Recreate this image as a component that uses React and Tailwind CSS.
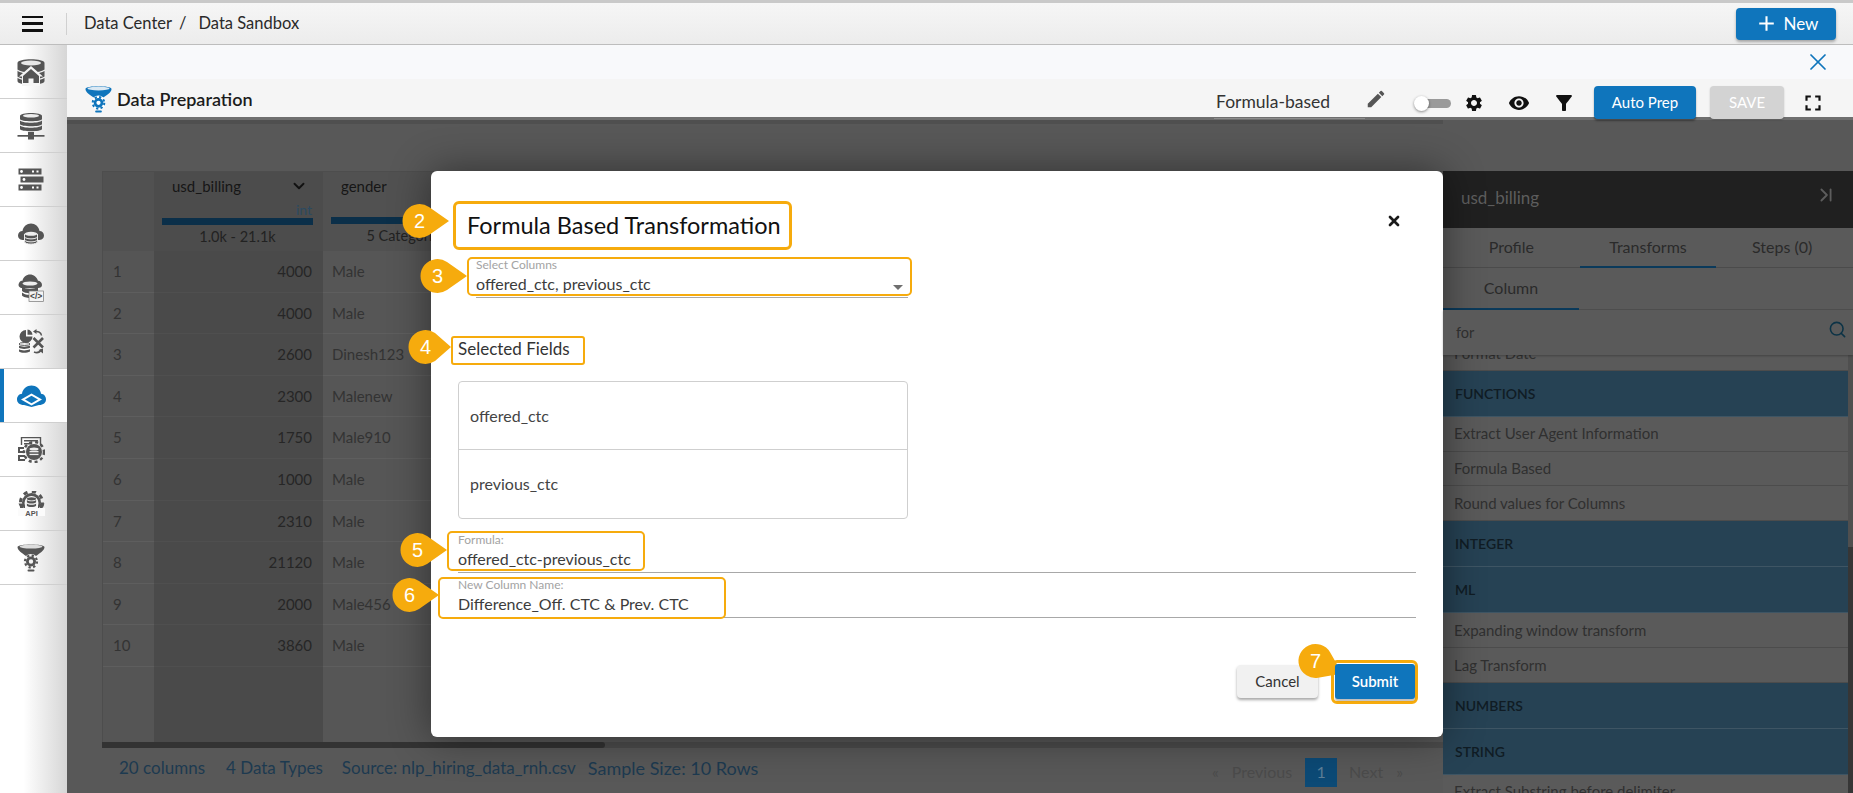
import React from 'react';
import { MdEdit, MdSettings, MdVisibility, MdFilterAlt, MdFullscreen, MdAdd, MdArrowDropDown } from 'react-icons/md';
import { X, Search, ChevronDown, ChevronLast } from 'lucide-react';

const rows = [
  [1, 4000, 'Male'], [2, 4000, 'Male'], [3, 2600, 'Dinesh123'], [4, 2300, 'Malenew'], [5, 1750, 'Male910'],
  [6, 1000, 'Male'], [7, 2310, 'Male'], [8, 21120, 'Male'], [9, 2000, 'Male456'], [10, 3860, 'Male'],
];

function FunnelGear({ color, rim, hole = '#ffffff', className }) {
  return (
    <svg viewBox="0 0 28 29" className={className}>
      <path d="M0.5 4C0.5 0.5 27.5 0.5 27.5 4C27.5 7.500 23 10 19 13L9 13C5 10 0.5 7.500 0.5 4Z" fill={color} />
      <ellipse cx="14" cy="3.600" rx="11.500" ry="2" fill={rim} />
      <circle cx="14" cy="18.500" r="7.600" fill={hole} />
      <circle cx="14" cy="18.500" r="3.600" fill="none" stroke={color} strokeWidth="2.800" />
      <circle cx="14" cy="18.500" r="6" fill="none" stroke={color} strokeWidth="2.200" strokeDasharray="2.300 2.400" />
      <rect x="10.500" y="26.500" width="7" height="2" rx="1" fill={color} />
    </svg>
  );
}

function DbHome() {
  return (
    <svg viewBox="0 0 28 28" className="w-[28px] h-[28px]">
      <path d="M0.500 5C0.500 0 27.500 0 27.500 5V23C27.500 28 0.500 28 0.500 23Z" fill="#555" />
      <ellipse cx="14" cy="5" rx="10" ry="2.400" fill="#e8e8e8" />
      <path d="M0 12C6 16 22 16 28 12M0 19C6 23 22 23 28 19" stroke="#f2f2f2" strokeWidth="1.200" fill="none" />
      <path d="M14 8L26 18.500L23 18.500V28H5V18.500L2 18.500Z" fill="#f5f5f5" />
      <path d="M14 11L22 18V25H16.500V20.500H11.500V25H6V18Z" fill="#555" />
    </svg>
  );
}

function DbNet() {
  return (
    <svg viewBox="0 0 28 28" className="w-[28px] h-[28px]">
      <path d="M3 4C3 0 25 0 25 4V7C25 10 3 10 3 7Z" fill="#555" />
      <ellipse cx="14" cy="3.800" rx="8" ry="1.700" fill="#eee" />
      <path d="M3 8.500C6 11.500 22 11.500 25 8.500V12C25 15 3 15 3 12Z" fill="#555" />
      <path d="M3 13.500C6 16.500 22 16.500 25 13.500V17C25 20 3 20 3 17Z" fill="#555" />
      <rect x="11" y="20" width="6" height="7.500" fill="#555" />
      <rect x="0.500" y="23" width="27" height="1.700" fill="#555" />
    </svg>
  );
}

function Servers() {
  return (
    <svg viewBox="0 0 26 24" className="w-[26px] h-[24px]">
      <rect x="0.500" y="0.500" width="23" height="6" fill="#555" />
      <rect x="2.500" y="8.500" width="23" height="6" fill="#555" />
      <rect x="0.500" y="16.500" width="23" height="6" fill="#555" />
      <circle cx="3.500" cy="3.500" r="1.400" fill="#fff" /><rect x="14" y="2.500" width="2" height="2" fill="#fff" /><rect x="18.500" y="2.500" width="2" height="2" fill="#fff" />
      <circle cx="6" cy="11.500" r="1.400" fill="#fff" />
      <circle cx="3.500" cy="19.500" r="1.400" fill="#fff" /><rect x="14" y="18.500" width="2" height="2" fill="#fff" /><rect x="18.500" y="18.500" width="2" height="2" fill="#fff" />
    </svg>
  );
}

function CloudDb() {
  return (
    <svg viewBox="0 0 26 22" className="w-[26px] h-[22px]">
      <path d="M4.500 17C1.500 17 0 14.800 0 12.500C0 10 2 8 4.500 8C5 3.500 9 0.500 13 0.500C17 0.500 21 3.500 21.500 8C24 8 26 10 26 12.500C26 14.800 24.500 17 21.500 17Z" fill="#555" />
      <path d="M6.500 11V18.500C6.500 22 19.500 22 19.500 18.500V11" fill="#555" stroke="#eee" strokeWidth="1" />
      <ellipse cx="13" cy="10.800" rx="6.500" ry="2" fill="#eee" />
      <path d="M6.500 14C8.500 16.500 17.500 16.500 19.500 14M6.500 17C8.500 19.500 17.500 19.500 19.500 17" stroke="#eee" strokeWidth="1" fill="none" />
    </svg>
  );
}

function CloudCode() {
  return (
    <svg viewBox="0 0 26 28" className="w-[26px] h-[28px]">
      <path d="M3 14C0.500 13 0 11 1 9C2 7 3.500 6.800 4.500 6.800C5 3 8.500 0.500 12 0.500C15.500 0.500 19 3 20 6.800C22 6.800 24 8.500 24 11C24 13 22.500 14 20 14Z" fill="#555" />
      <ellipse cx="12" cy="9.500" rx="7.500" ry="2" fill="#eee" />
      <path d="M4 12.500C7 15.500 17 15.500 20 12.500V17C17 20 7 20 4 17Z" fill="#555" />
      <path d="M4 18.500C7 21 12 21 12 21V24C9 24 5 23 4 21.500Z" fill="#555" />
      <rect x="11" y="17" width="14.500" height="10.500" fill="#f4f4f4" stroke="#777" strokeWidth="0.700" />
      <text x="18.200" y="25" textAnchor="middle" fontSize="8.500" fontWeight="700" fontFamily="Liberation Sans" fill="#444">&lt;/&gt;</text>
    </svg>
  );
}

function PieX() {
  return (
    <svg viewBox="0 0 26 25" className="w-[26px] h-[25px]">
      <path d="M8 1V7.500H14.500A6.500 6.500 0 1 1 8 1Z" fill="#555" />
      <path d="M9.500 0.500A6 6 0 0 1 14.500 5.800H9.500Z" fill="#555" />
      <path d="M12 16.500C9 18 3 18 1 16.500V18.800C3 20.300 9 20.300 12 18.800ZM12 20.300C9 21.800 3 21.800 1 20.300V22.500C3 24.300 9 24.300 12 22.500Z" fill="#555" />
      <ellipse cx="6.500" cy="15" rx="5.500" ry="1.400" fill="none" stroke="#555" strokeWidth="1" />
      <path d="M15.500 9L25 18.500M25 9L15.500 18.500" stroke="#555" strokeWidth="2.600" />
      <path d="M23.500 6.500C23 3.500 20 2 17.500 2.500" fill="none" stroke="#555" strokeWidth="1.500" />
      <path d="M18.500 0L18.500 5L15 2.500Z" fill="#555" />
      <path d="M16 23C19 24.300 22 23 23.500 20.500" fill="none" stroke="#555" strokeWidth="1.500" />
      <path d="M25 24.500V19.500L20.500 21Z" fill="#555" />
    </svg>
  );
}

function CloudBlue() {
  return (
    <svg viewBox="0 0 29 22" className="w-[29px] h-[22px]">
      <path d="M7 20C2.500 20 0 17.500 0 14.500C0 11.500 2 9 5 8.800C5.500 4 10 0.500 14.500 0.500C19 0.500 23.500 4 24 8.800C27 9 29 11.500 29 14.500C29 17.500 26.500 20 22 20L14.500 22Z" fill="#0f75bc" />
      <path d="M14.500 8.500L25 14.500L14.500 20.500L4 14.500Z" fill="#fff" />
      <path d="M14.500 10.800L21 14.500L14.500 18.200L8 14.500Z" fill="#0f75bc" />
    </svg>
  );
}

function GearDoc() {
  return (
    <svg viewBox="0 0 27 26" className="w-[27px] h-[26px]">
      <path d="M3.500 8V0.500H22.500V8" fill="none" stroke="#555" strokeWidth="1.400" />
      <rect x="6" y="3" width="14" height="1.500" fill="#555" />
      <rect x="6" y="6" width="8" height="1.500" fill="#555" />
      <path d="M0 10H6V12H2V14H7V16H0ZM0 18H7V20H2V22H7V24H0Z" fill="#555" />
      <circle cx="16" cy="15" r="8" fill="#555" />
      <circle cx="16" cy="15" r="10" fill="none" stroke="#555" strokeWidth="2.500" strokeDasharray="3 3" />
      <ellipse cx="16" cy="12" rx="4.500" ry="1.500" fill="#eee" />
      <rect x="11.500" y="14" width="9" height="1.300" fill="#eee" />
      <rect x="11.500" y="16.800" width="9" height="1.300" fill="#eee" />
    </svg>
  );
}

function GearApi() {
  return (
    <svg viewBox="0 0 27 25" className="w-[27px] h-[25px]">
      <circle cx="13.500" cy="11.500" r="9.500" fill="#555" />
      <circle cx="13.500" cy="11.500" r="11" fill="none" stroke="#555" strokeWidth="3" strokeDasharray="4.200 4.440" />
      <circle cx="13.500" cy="12" r="7" fill="#f8f8f8" />
      <rect x="0" y="17" width="27" height="8" fill="#fbfbfb" />
      <rect x="7" y="14" width="13" height="4" fill="#f8f8f8" />
      <ellipse cx="13.500" cy="7.800" rx="4.600" ry="1.600" fill="#555" />
      <path d="M8.900 9C10 10.800 17 10.800 18.100 9V11.300C17 13 10 13 8.900 11.300ZM8.900 12.500C10 14.300 17 14.300 18.100 12.500V14.800C17 16.500 10 16.500 8.900 14.800Z" fill="#555" />
      <path d="M0.500 12.500H5V17H2.500Z M26.500 12.500H22V17H24.500Z" fill="#555" />
      <text x="13.500" y="24.800" textAnchor="middle" fontSize="7.500" fontWeight="700" fontFamily="Liberation Sans" fill="#555">API</text>
    </svg>
  );
}

const sideItems = [
  { icon: <DbHome /> },
  { icon: <DbNet /> },
  { icon: <Servers /> },
  { icon: <CloudDb /> },
  { icon: <CloudCode /> },
  { icon: <PieX /> },
  { icon: <CloudBlue />, active: true },
  { icon: <GearDoc /> },
  { icon: <GearApi /> },
  { icon: <FunnelGear color="#555" rim="#ddd" hole="#f4f4f4" className="w-[28px] h-[29px]" /> },
];

function Badge({ className, n, tip = 47, svgClass = '' }) {
  return (
    <div className={`absolute w-[50px] h-[36px] ${className}`}>
      <svg viewBox="0 0 50 36" className={`absolute inset-0 w-[50px] h-[36px] overflow-visible ${svgClass}`}>
        <path d={`M27 3.900L${tip} 18L27 32.100A17 17 0 1 1 27 3.900Z`} fill="#f6ab0d" />
      </svg>
      <span className="absolute left-0 top-0 w-[35px] h-[36px] flex items-center justify-center text-[20px] text-white font-['Liberation_Sans',sans-serif]">{n}</span>
    </div>
  );
}

function Field({ label, value }) {
  return (
    <div className="border-b border-[#a8a8a8] pb-[3px]">
      <div className="text-[12px] leading-[14px] text-[#a3a3a3]">{label}</div>
      <div className="mt-[2px] text-[16px] leading-[20px] text-[#3c3c3c]">{value}</div>
    </div>
  );
}

export default function App() {
  return (
    <div className="relative w-[1853px] h-[793px] overflow-hidden bg-white flex flex-col font-['Lato','Noto_Sans',sans-serif] text-[#222]">
      {/* Top bar */}
      <header className="h-[45px] shrink-0 flex items-center border-b border-[#bdbdbd] border-t-[3px] border-t-[#c9c9c9] bg-gradient-to-b from-[#f6f6f6] to-[#ececec]">
        <div className="w-[67px] h-[22px] flex flex-col justify-between items-center border-r border-[#d0d0d0] py-[3px] pr-[2px]">
          <span className="block w-[21px] h-[2.500px] bg-[#111]" />
          <span className="block w-[21px] h-[2.500px] bg-[#111]" />
          <span className="block w-[21px] h-[2.500px] bg-[#111]" />
        </div>
        <nav className="ml-[17px] flex items-center text-[16.500px] text-[#2a2a2a]">
          <span>Data Center</span>
          <span className="ml-[7px] mr-[12px]">/</span>
          <span>Data Sandbox</span>
        </nav>
        <button className="ml-auto mr-[17px] w-[100px] h-[32px] rounded-[4px] bg-[#0f75bc] text-white text-[17px] flex items-center justify-center gap-[5px] shadow-[0_2px_3px_rgba(0,0,0,0.3)]">
          <MdAdd size={25} />
          <span>New</span>
        </button>
      </header>

      <div className="flex-1 flex min-h-0">
        {/* Sidebar */}
        <aside className="w-[67px] shrink-0 flex flex-col bg-gradient-to-r from-white from-[35%] to-[#d6d6d6]">
          {sideItems.map((it, i) => (
            <div key={i} className={`h-[54px] flex items-center justify-center pr-[5px] border-b border-[#cfcfcf] ${it.active ? 'shadow-[inset_4px_0_0_#0f75bc] bg-white' : ''}`}>
              {it.icon}
            </div>
          ))}
        </aside>

        {/* Main */}
        <main className="flex-1 flex flex-col min-w-0">
          <div className="h-[34px] shrink-0 bg-[#f8f9fb] flex items-center justify-end pr-[21px]">
            <X size={28} strokeWidth={1.5} className="text-[#0f75bc]" />
          </div>
          <div className="relative z-10 h-[38px] shrink-0 bg-[#f5f5f5] flex items-center pt-[10px] pr-[27px]">
            <div className="flex items-center -mt-[8px] ml-[18px]">
              <FunnelGear color="#0f75bc" rim="#dbe9f3" className="w-[27px] h-[28px]" />
              <span className="ml-[5px] text-[18px] font-semibold text-[#1c1c1c]">Data Preparation</span>
            </div>
            <div className="ml-auto w-[151px] h-[35px] pt-[6px] pl-[2px] text-[17.500px] leading-[24px] text-[#333] border-b border-[#8d8d8d] -mt-[3px]">Formula-based</div>
            <MdEdit size={22} className="text-[#555] -mt-[9px]" />
            <div className="relative ml-[27px] w-[37px] h-[15px] flex items-center">
              <span className="ml-[4px] w-[33px] h-[9px] rounded-full bg-[#9a9a9a]" />
              <span className="absolute left-0 top-0 w-[15px] h-[15px] rounded-full bg-white shadow-[0_1px_3px_rgba(0,0,0,0.45)]" />
            </div>
            <MdSettings size={20} className="ml-[13px] text-[#111]" />
            <MdVisibility size={22} className="ml-[24px] text-[#111]" />
            <MdFilterAlt size={24} className="ml-[22px] text-[#111]" />
            <button className="ml-[18px] -mt-[2px] w-[102px] h-[33px] rounded-[4px] bg-[#0f75bc] text-white text-[15px] shadow-[0_2px_2px_rgba(0,0,0,0.35)]">Auto Prep</button>
            <button className="ml-[14px] -mt-[2px] w-[74px] h-[33px] rounded-[4px] bg-[#d3d3d3] text-white text-[15px] shadow-[0_1px_2px_rgba(0,0,0,0.2)]">SAVE</button>
            <MdFullscreen size={26} className="ml-[16px] text-[#111]" />
          </div>

          {/* Dimmed workspace */}
          <div className="flex-1 min-h-0 flex bg-[#585858] border-t-[3px] border-t-[#6f6f6f]">
            <div className="flex-1 min-w-0 flex flex-col pt-[4px]">
              <div className="h-[4px] -mt-[4px] bg-[#4f4f4f]" />
              <div className="flex-1 min-h-0 flex flex-col pt-[47px] pl-[35px]">
                <section className="h-[571px] flex border-l border-t border-[#4d4d4d] bg-[#575757] text-[15px]">
                  <div className="w-[51px] shrink-0 bg-[#555]">
                    <div className="h-[79px] bg-[#515151]" />
                    {rows.map((r) => (
                      <div key={r[0]} className="h-[41.600px] flex items-center pl-[10px] text-[#333] border-b border-[#5e5e5e]">{r[0]}</div>
                    ))}
                  </div>
                  <div className="w-[169px] shrink-0 bg-[#4a4a4a]">
                    <div className="h-[79px] bg-[#4c4c4c] pl-[8px] pr-[10px] relative">
                      <div className="flex items-center justify-between pl-[10px] pr-[5px] pt-[3px] text-[15px] text-[#161616]">
                        <span>usd_billing</span>
                        <ChevronDown size={18} strokeWidth={2.5} className="text-[#111]" />
                      </div>
                      <div className="text-right text-[14px] leading-[14px] pr-[1px] mt-[5px] text-[#2b4a61]">int</div>
                      <div className="h-[7px] bg-[#0b2f49] mt-[1px]" />
                      <div className="text-center text-[14.500px] leading-[18px] mt-[3px] text-[#222]">1.0k - 21.1k</div>
                    </div>
                    {rows.map((r) => (
                      <div key={r[0]} className="h-[41.600px] flex items-center justify-end pr-[11px] text-[#262626] border-b border-[#4f4f4f]">{r[1]}</div>
                    ))}
                  </div>
                  <div className="w-[169px] shrink-0 bg-[#565656]">
                    <div className="h-[79px] bg-[#515151] pl-[8px] pr-[10px]">
                      <div className="pl-[10px] pt-[3px] h-[26px] text-[15px] text-[#161616]">gender</div>
                      <div className="h-[7px] bg-[#0b2f49] mt-[19px]" />
                      <div className="text-center text-[14.500px] leading-[18px] mt-[3px] text-[#222]">5 Categories</div>
                    </div>
                    {rows.map((r) => (
                      <div key={r[0]} className="h-[41.600px] flex items-center pl-[9px] text-[#333] border-b border-[#5e5e5e]">{r[2]}</div>
                    ))}
                  </div>
                </section>
                <div className="h-[6px] bg-[#4c4c4c]">
                  <div className="w-[503px] h-[6px] rounded-r-[3px] bg-[#333]" />
                </div>
                <footer className="flex-1 flex items-center text-[17px] text-[#1d3a50] pl-[17px]">
                  <div className="flex items-center pb-[5px]">
                    <span>20 columns</span>
                    <span className="ml-[21px]">4 Data Types</span>
                    <span className="ml-[19px]">Source: nlp_hiring_data_rnh.csv</span>
                    <span className="ml-[12px] text-[18px]">Sample Size: 10 Rows</span>
                  </div>
                  <div className="ml-auto flex items-center text-[#4b4b4b] mr-[40px] text-[16px] pt-[3px]">
                    <span>«</span>
                    <span className="ml-[13px]">Previous</span>
                    <span className="ml-[13px] w-[32px] h-[29px] bg-[#0c4a76] text-[#5d7f98] flex items-center justify-center">1</span>
                    <span className="ml-[12px]">Next</span>
                    <span className="ml-[13px]">»</span>
                  </div>
                </footer>
              </div>
            </div>

            {/* Right panel */}
            <aside className="w-[410px] shrink-0 mt-[51px] flex flex-col bg-[#5a5a5a] text-[15px] text-[#2e2e2e] min-h-0">
              <div className="h-[57px] shrink-0 bg-[#202020] flex items-center justify-between pl-[18px] pr-[16px] pb-[4px] text-[#5d5d5d] text-[17px]">
                <span>usd_billing</span>
                <ChevronLast size={22} className="text-[#5d5d5d] -mt-[5px]" />
              </div>
              <div className="h-[40px] shrink-0 grid grid-cols-3 text-center border-b border-[#4b4b4b] text-[16px] text-[#2a2a2a]">
                <div className="flex items-center justify-center pb-[2px]">Profile</div>
                <div className="flex items-center justify-center border-b-[2px] border-[#0b3a5b] h-[40px] pb-[1px]">Transforms</div>
                <div className="flex items-center justify-center pr-[5px] pb-[2px]">Steps (0)</div>
              </div>
              <div className="h-[42px] shrink-0 border-b border-[#4f4f4f]">
                <div className="w-[136px] h-[42px] flex items-center justify-center border-b-[2px] border-[#0b3a5b] text-[16px] text-[#2a2a2a]">Column</div>
              </div>
              <div className="relative z-10 h-[45px] shrink-0 flex items-center justify-between pl-[13px] pr-[6px] bg-[#5a5a5a] shadow-[0_1px_2px_rgba(0,0,0,0.25)]">
                <span className="text-[14.500px] text-[#2e2e2e]">for</span>
                <Search size={19} strokeWidth={2} className="text-[#0c3346] -mt-[6px]" />
              </div>
              <div className="flex-1 min-h-0 flex overflow-hidden">
                <div className="flex-1 min-w-0 -mt-[19px]">
                  {[
                    ['i', 'Format Date'],
                    ['g', 'FUNCTIONS'],
                    ['i', 'Extract User Agent Information'],
                    ['i', 'Formula Based'],
                    ['i', 'Round values for Columns'],
                    ['g', 'INTEGER'],
                    ['g', 'ML'],
                    ['i', 'Expanding window transform'],
                    ['i', 'Lag Transform'],
                    ['g', 'NUMBERS'],
                    ['g', 'STRING'],
                    ['i', 'Extract Substring before delimiter'],
                  ].map(([t, label]) =>
                    t === 'g' ? (
                      <div key={label} className="h-[46px] flex items-center pl-[12px] bg-[#264254] border-b border-[#3e5564] text-[14px] font-semibold text-[#101c24]">{label}</div>
                    ) : (
                      <div key={label} className="h-[34.800px] flex items-center pl-[11px] border-b border-[#4c4c4c] text-[#303030]">{label}</div>
                    )
                  )}
                </div>
                <div className="w-[5px] shrink-0 bg-[#4f4f4f] flex flex-col justify-end">
                  <div className="h-[246px] bg-[#363636]" />
                </div>
              </div>
            </aside>
          </div>
        </main>
      </div>

      {/* Modal */}
      <div role="dialog" className="absolute left-[431px] top-[171px] w-[1012px] h-[566px] bg-white rounded-[6px] shadow-[0_0_40px_rgba(0,0,0,0.45)] px-[27px] pt-[39px] flex flex-col text-[#333]">
        <div className="flex items-center justify-between pr-[14px] h-[30px]">
          <h2 className="ml-[9px] text-[23.500px] leading-[30px] text-[#111]">Formula Based Transformation</h2>
          <X size={16} strokeWidth={4} className="text-[#1a1a1a] -mt-[8px]" />
        </div>
        <div className="relative mt-[18px] ml-[18px] w-[432px]">
          <Field label="Select Columns" value="offered_ctc, previous_ctc" />
          <MdArrowDropDown size={24} className="absolute right-[-2px] top-[17px] text-[#6f6f6f]" />
        </div>
        <div className="mt-[41px] text-[17px] leading-[20px] text-[#333]">Selected Fields</div>
        <div className="mt-[22px] w-[450px] h-[138px] shrink-0 border border-[#cfcfcf] rounded-[4px] text-[16px] text-[#444]">
          <div className="h-[68px] flex items-center pl-[11px] border-b border-[#cfcfcf]">offered_ctc</div>
          <div className="h-[68px] flex items-center pl-[11px]">previous_ctc</div>
        </div>
        <div className="mt-[14px]"><Field label="Formula:" value="offered_ctc-previous_ctc" /></div>
        <div className="mt-[5px]"><Field label="New Column Name:" value="Difference_Off. CTC & Prev. CTC" /></div>
        <div className="mt-[46px] flex justify-end items-center pr-[1px]">
          <button className="w-[81px] h-[33px] rounded-[4px] bg-[#f1f1f1] text-[15px] text-[#333] shadow-[0_2px_3px_rgba(0,0,0,0.35)]">Cancel</button>
          <button className="relative z-30 ml-[17px] w-[80px] h-[35px] rounded-[3px] bg-[#0f75bc] text-white text-[15px] font-semibold shadow-[0_2px_1px_rgba(0,0,0,0.25)]">Submit</button>
        </div>
      </div>

      {/* Annotation overlays */}
      <div className="absolute left-[453px] top-[201px] w-[339px] h-[49px] border-[3px] border-[#f6ab0d] rounded-[6px] pointer-events-none" />
      <div className="absolute left-[467px] top-[257px] w-[445px] h-[39px] border-2 border-[#f6ab0d] rounded-[5px] pointer-events-none" />
      <div className="absolute left-[451px] top-[336px] w-[134px] h-[29px] border-2 border-[#f6ab0d] rounded-[3px] pointer-events-none" />
      <div className="absolute left-[447px] top-[531px] w-[198px] h-[40px] border-2 border-[#f6ab0d] rounded-[5px] pointer-events-none" />
      <div className="absolute left-[438px] top-[577px] w-[288px] h-[42px] border-2 border-[#f6ab0d] rounded-[5px] pointer-events-none" />
      <Badge className="left-[402px] top-[203px]" n="2" />
      <Badge className="left-[420px] top-[258px]" n="3" />
      <Badge className="left-[408px] top-[329px]" n="4" tip={43} />
      <Badge className="left-[400px] top-[532px]" n="5" />
      <Badge className="left-[392px] top-[577px]" n="6" />
      <Badge className="left-[1298px] top-[643px]" n="7" svgClass="origin-[17.500px_18px] rotate-[25deg]" />
      <div className="absolute left-[1331px] top-[660px] w-[87px] h-[44px] border-[3px] border-[#f6ab0d] rounded-[6px] pointer-events-none" />
    </div>
  );
}
